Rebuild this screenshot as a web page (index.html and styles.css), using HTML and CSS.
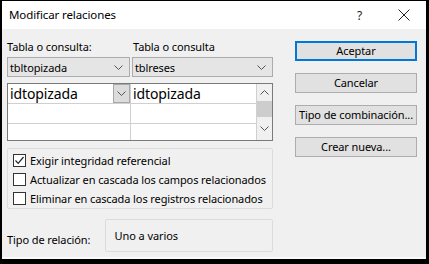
FILE: index.html
```html
<!DOCTYPE html>
<html lang="es">
<head>
<meta charset="utf-8">
<title>Modificar relaciones</title>
<link rel="stylesheet" href="styles.css">
</head>
<body>
<div class="window">
  <div class="titlebar">
    <span class="title">Modificar relaciones</span>
    <span class="help">?</span>
    <svg class="close" width="12" height="12" viewBox="0 0 12 12"><path d="M0.5 0.5 L11.5 11.5 M11.5 0.5 L0.5 11.5" stroke="#222" stroke-width="1" fill="none"/></svg>
  </div>
  <div class="body">
    <div class="left">
      <div class="heads">
        <span class="head h1">Tabla o consulta:</span>
        <span class="head h2">Tabla o consulta</span>
      </div>
      <div class="combos">
        <div class="combo c1"><span>tbltopizada</span><svg class="chev" width="9" height="5" viewBox="0 0 9 5"><path d="M0.5 0.5 L4.5 4.5 L8.5 0.5" stroke="#555" fill="none"/></svg></div>
        <div class="combo c2"><span>tblreses</span><svg class="chev" width="9" height="5" viewBox="0 0 9 5"><path d="M0.5 0.5 L4.5 4.5 L8.5 0.5" stroke="#555" fill="none"/></svg></div>
      </div>
      <div class="grid">
        <div class="cells">
          <div class="cell first r1"><span class="ctext">idtopizada</span><span class="dd"><svg width="9" height="5" viewBox="0 0 9 5"><path d="M0.5 0.5 L4.5 4.5 L8.5 0.5" stroke="#555" fill="none"/></svg></span></div>
          <div class="cell r1"><span class="ctext">idtopizada</span></div>
          <div class="cell first r2"></div>
          <div class="cell r2"></div>
          <div class="cell first r3"></div>
          <div class="cell r3"></div>
        </div>
        <div class="scrollbar">
          <svg class="sarrow" width="9" height="5" viewBox="0 0 9 5"><path d="M0.5 4.5 L4.5 0.5 L8.5 4.5" stroke="#555" fill="none"/></svg>
          <div class="thumb"></div>
          <svg class="sarrow down" width="9" height="5" viewBox="0 0 9 5"><path d="M0.5 0.5 L4.5 4.5 L8.5 0.5" stroke="#555" fill="none"/></svg>
        </div>
      </div>
      <div class="group">
        <div class="check"><span class="box"><svg width="11" height="11" viewBox="0 0 11 11"><path d="M1.5 5.5 L4.2 8.3 L9.5 2" stroke="#222" stroke-width="1.2" fill="none"/></svg></span><span>Exigir integridad referencial</span></div>
        <div class="check"><span class="box"></span><span>Actualizar en cascada los campos relacionados</span></div>
        <div class="check"><span class="box"></span><span>Eliminar en cascada los registros relacionados</span></div>
      </div>
      <div class="reltype">
        <span class="rellabel">Tipo de relación:</span>
        <div class="relbox">Uno a varios</div>
      </div>
    </div>
    <div class="right">
      <button class="btn default">Aceptar</button>
      <button class="btn">Cancelar</button>
      <button class="btn">Tipo de combinación...</button>
      <button class="btn">Crear nueva...</button>
    </div>
  </div>
</div>
</body>
</html>
```
FILE: styles.css
```css
* { box-sizing: border-box; }
html, body { margin: 0; padding: 0; }
body {
  font-family: "Noto Sans", "Open Sans", sans-serif;
  font-size: 11px;
  letter-spacing: -0.1px;
  color: #000;
  background: #000;
  white-space: nowrap;
}
.window {
  width: 429px;
  height: 264px;
  border-style: solid;
  border-color: #000;
  border-width: 1px 3px 5px 2px;
  display: flex;
  flex-direction: column;
  background: #f0f0f0;
}
.titlebar {
  height: 28px;
  background: #fff;
  display: flex;
  align-items: center;
}
.title {
  margin-left: 7px;
  font-size: 11.5px;
  line-height: 16px;
  margin-top: -1px;
}
.help {
  margin-left: auto;
  margin-right: 36px;
  font-size: 12px;
  color: #222;
}
.close { margin-right: 16px; }
.body {
  display: flex;
  padding: 10px 0 0 5px;
  border-bottom: 2px solid #fafafa;
  height: 230px;
}
.left {
  width: 266px;
  display: flex;
  flex-direction: column;
}
.heads {
  display: flex;
  height: 16px;
  line-height: 16px;
}
.h1 { width: 126px; }
.combos {
  display: flex;
  margin-top: 2px;
  gap: 2px;
}
.combo {
  height: 20px;
  background: #e5e5e5;
  border: 1px solid #acacac;
  display: flex;
  align-items: center;
  padding: 0 6px 0 2px;
  justify-content: space-between;
}
.c1 { width: 123px; }
.c2 { width: 141px; }
.grid {
  margin-top: 6px;
  height: 58px;
  border: 1px solid #7a7a7a;
  display: flex;
  background: #fff;
}
.cells {
  width: 248px;
  display: grid;
  grid-template-columns: 123px 125px;
  grid-template-rows: 19px 19px 16px;
  row-gap: 1px;
  background: #d0d0d0;
}
.cell {
  background: #fff;
  position: relative;
  font-size: 14px;
  letter-spacing: -0.1px;
  line-height: 19px;
  padding-left: 2px;
}
.cell.first { border-right: 1px solid #d0d0d0; }
.dd {
  position: absolute;
  right: 0;
  top: 0;
  width: 17px;
  height: 19px;
  background: #dcdcdc;
  border: 1px solid #a8a8a8;
  display: flex;
  align-items: center;
  justify-content: center;
}
.scrollbar {
  width: 17px;
  background: #f0f0f0;
  border-left: 1px solid #d0d0d0;
  display: flex;
  flex-direction: column;
  align-items: center;
}
.sarrow { margin-top: 6px; }
.thumb {
  width: 15px;
  height: 16px;
  background: #cdcdcd;
  margin-top: 6px;
}
.sarrow.down { margin-top: 9px; }
.group {
  margin-top: 7px;
  height: 61px;
  border: 1px solid #dcdcdc;
  border-radius: 2px;
  padding: 2px 0 0 5px;
}
.check {
  height: 19px;
  display: flex;
  align-items: center;
  gap: 4px;
}
.box {
  flex: 0 0 13px;
  width: 13px;
  height: 13px;
  border: 1px solid #333;
  background: #fff;
  display: flex;
  align-items: center;
  justify-content: center;
}
.reltype {
  margin-top: 10px;
  display: flex;
  align-items: center;
}
.rellabel {
  width: 98px;
  margin-top: 8px;
}
.relbox {
  width: 169px;
  height: 33px;
  border: 1px solid #dcdcdc;
  border-radius: 2px;
  padding: 8px 0 0 9px;
  line-height: 16px;
}
.right {
  margin-left: 22px;
  padding-top: 2px;
  display: flex;
  flex-direction: column;
  gap: 12px;
}
.btn {
  width: 122px;
  height: 20px;
  background: #e1e1e1;
  border: 1px solid #adadad;
  font-family: inherit;
  font-size: inherit;
  letter-spacing: inherit;
  color: #000;
  padding: 0;
  line-height: 16px;
  white-space: nowrap;
}
.btn.default {
  border: 2px solid #0078d7;
}
```
